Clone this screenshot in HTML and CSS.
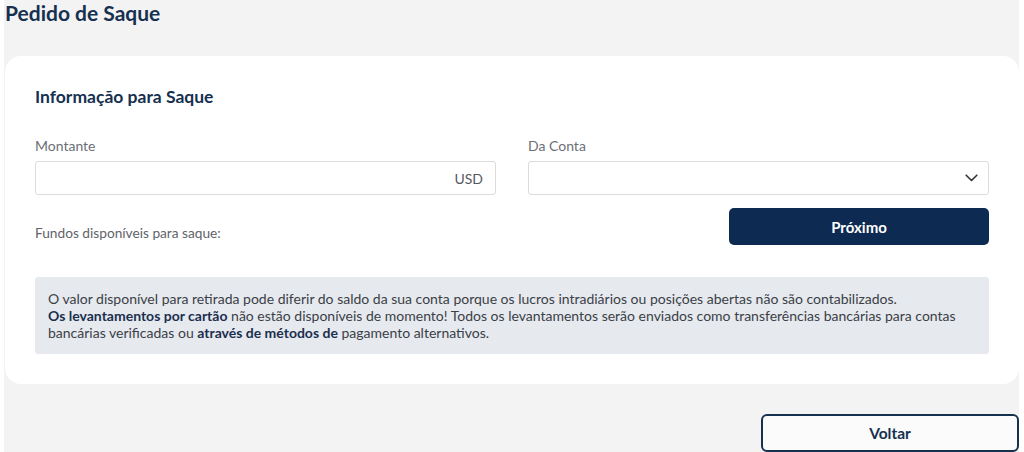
FILE: index.html
```html
<!DOCTYPE html>
<html lang="pt">
<head>
    <meta charset="UTF-8">
    <meta name="viewport" content="width=device-width, initial-scale=1.0">
    <title>Pedido de Saque</title>
    <link rel="stylesheet" href="styles.css">
</head>
<body>

    <div class="page">
        <h1>Pedido de Saque</h1>

        <div class="card">
            <h2>Informação para Saque</h2>

            <div class="form-row">
                <div class="field">
                    <label>Montante</label>
                    <div class="input">
                        <span class="suffix">USD</span>
                    </div>
                </div>
                <div class="field">
                    <label>Da Conta</label>
                    <div class="input select">
                        <svg width="13" height="8" viewBox="0 0 13 8">
                            <path d="M1.2 1.2 L6.5 6.5 L11.8 1.2" fill="none" stroke="#333" stroke-width="1.6" stroke-linecap="round" stroke-linejoin="round"/>
                        </svg>
                    </div>
                </div>
            </div>

            <div class="form-row">
                <p class="funds">Fundos disponíveis para saque:</p>
                <div class="actions">
                    <button class="btn-primary">Próximo</button>
                </div>
            </div>

            <div class="notice">
                O valor disponível para retirada pode diferir do saldo da sua conta porque os lucros intradiários ou posições abertas não são contabilizados.<br>
                <b>Os levantamentos por cartão</b> não estão disponíveis de momento! Todos os levantamentos serão enviados como transferências bancárias para contas bancárias verificadas ou <b>através de métodos de</b> pagamento alternativos.
            </div>
        </div>

        <div class="footer">
            <button class="btn-outline">Voltar</button>
        </div>
    </div>

</body>
</html>
```

FILE: styles.css
```css
body {
    margin: 0;
    background: #fff;
    font-family: Lato, "Open Sans", sans-serif;
}

.page {
    margin: 0 5px 0 4px;
    background: #f3f3f4;
    height: 452px;
    overflow: hidden;
}

h1 {
    margin: 0;
    padding-left: 1px;
    font-size: 21px;
    font-weight: 700;
    color: #16304f;
}

.card {
    margin: 31px 0 0 1px;
    padding: 30px;
    background: #fff;
    border-radius: 16px;
}

h2 {
    margin: 0 0 30px;
    font-size: 17.5px;
    font-weight: 700;
    color: #16304f;
}

.form-row {
    display: grid;
    grid-template-columns: 1fr 1fr;
    column-gap: 32px;
    margin-bottom: 13px;
}

label {
    display: block;
    font-size: 14px;
    color: #6b6f76;
    margin-bottom: 7px;
}

.input {
    height: 34px;
    box-sizing: border-box;
    border: 1px solid #dcdcdc;
    border-radius: 3px;
    display: flex;
    align-items: center;
    justify-content: flex-end;
    padding: 0 12px;
}

.suffix {
    font-size: 14px;
    color: #55595f;
}

.select {
    padding-right: 10px;
}

.funds {
    margin: 16px 0 0;
    font-size: 13.7px;
    color: #5f636a;
}

.actions {
    display: flex;
    justify-content: flex-end;
}

.btn-primary {
    width: 260px;
    height: 37px;
    border: none;
    border-radius: 5px;
    background: #0c2a52;
    color: #fff;
    font-family: inherit;
    font-size: 15px;
    font-weight: 700;
}

.notice {
    margin-top: 32px;
    padding: 13px 13px;
    background: #e6e9ee;
    border-radius: 3px;
    font-size: 14px;
    line-height: 17px;
    color: #3a3f47;
}

.notice b {
    color: #1b2f4e;
}

.footer {
    display: flex;
    justify-content: flex-end;
    margin-top: 30px;
}

.btn-outline {
    width: 258px;
    height: 38px;
    border: 2px solid #16304f;
    border-radius: 6px;
    background: #fbfbfc;
    color: #16304f;
    font-family: inherit;
    font-size: 15.5px;
    font-weight: 700;
}
```
